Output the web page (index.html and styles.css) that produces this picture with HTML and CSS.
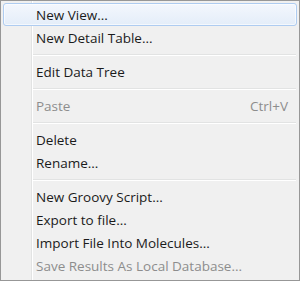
FILE: index.html
```html
<!DOCTYPE html>
<html>
<head>
<meta charset="utf-8">
<link rel="stylesheet" href="styles.css">
</head>
<body>
<div class="menu">
  <div class="item active"><span class="label">New View...</span></div>
  <div class="item"><span class="label">New Detail Table...</span></div>
  <div class="sep"></div>
  <div class="item"><span class="label">Edit Data Tree</span></div>
  <div class="sep"></div>
  <div class="item disabled"><span class="label">Paste</span><span class="shortcut">Ctrl+V</span></div>
  <div class="sep"></div>
  <div class="item"><span class="label">Delete</span></div>
  <div class="item"><span class="label">Rename...</span></div>
  <div class="sep"></div>
  <div class="item"><span class="label">New Groovy Script...</span></div>
  <div class="item"><span class="label">Export to file...</span></div>
  <div class="item"><span class="label">Import File Into Molecules...</span></div>
  <div class="item disabled"><span class="label">Save Results As Local Database...</span></div>
</div>
</body>
</html>
```
FILE: styles.css
```css
html, body {
  margin: 0;
  padding: 0;
  background: #ffffff;
}
.menu {
  box-sizing: border-box;
  width: 300px;
  height: 281px;
  border: 1px solid #979797;
  padding: 2px 2px 3px 2px;
  background-color: #f0f0f0;
  background-image: linear-gradient(to right, transparent 30px, #e2e3e3 30px, #e2e3e3 31px, #ffffff 31px, #ffffff 32px, transparent 32px);
  font-family: "Open Sans", "Noto Sans", sans-serif;
  font-size: 13.5px;
  color: #1b1b1b;
  display: flex;
  flex-direction: column;
}
.item {
  box-sizing: border-box;
  height: 23px;
  display: flex;
  align-items: center;
  padding-left: 32px;
  padding-right: 8px;
  border: 1px solid transparent;
  border-radius: 3px;
}
.item.active {
  border-color: #aeccf1;
  background: linear-gradient(to bottom, #f3f7fd, #e4edf9);
  box-shadow: inset 0 0 0 1px rgba(255,255,255,0.6);
}
.label {
  flex: 1;
  white-space: nowrap;
}
.shortcut {
  white-space: nowrap;
}
.disabled {
  color: #8d8d8d;
}
.sep {
  height: 11px;
  box-sizing: border-box;
  margin-left: 30px;
  margin-right: 1px;
  padding-top: 5px;
}
.sep::before {
  content: "";
  display: block;
  height: 1px;
  background: #e2e3e3;
  border-bottom: 1px solid #ffffff;
}
```
